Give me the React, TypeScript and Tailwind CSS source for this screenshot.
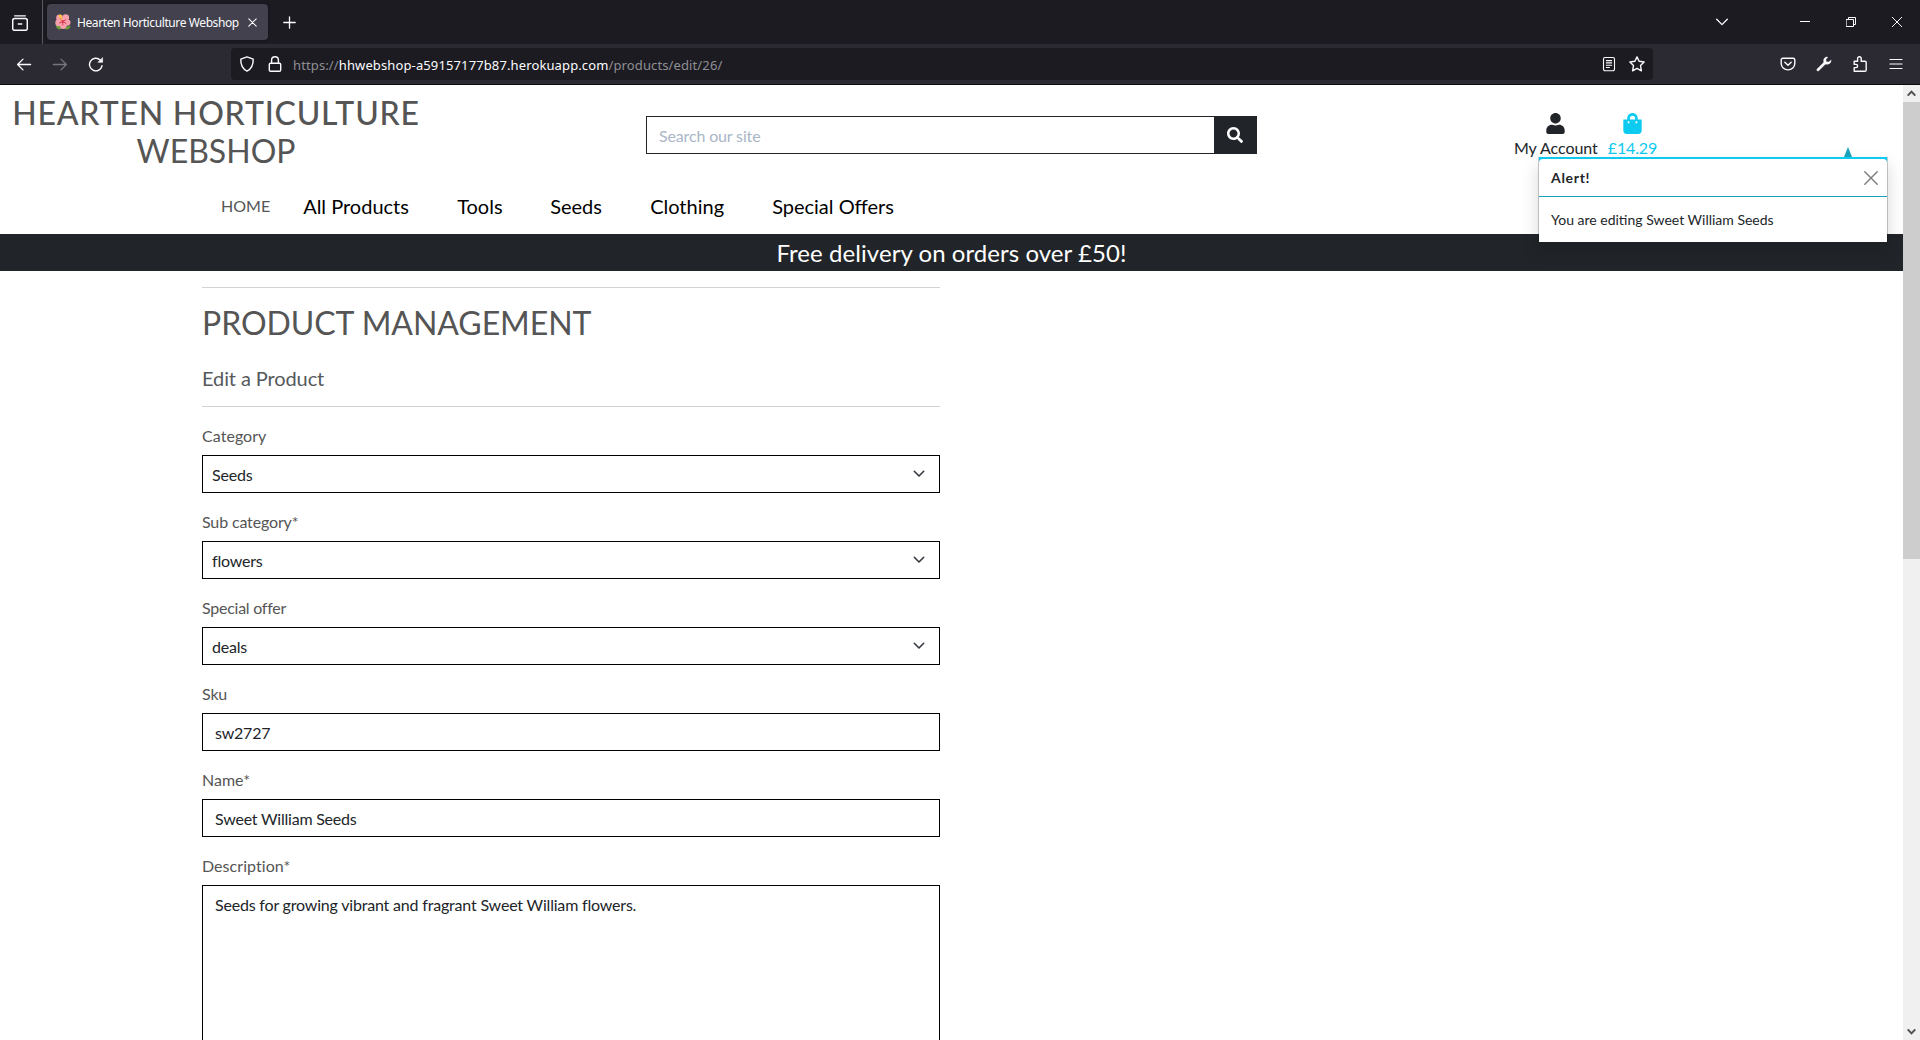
import type { ReactNode } from "react";
import { FaSearch, FaShoppingBag, FaUser } from "react-icons/fa";

function Icon({ size = 16, className = "", children }: { size?: number; className?: string; children: ReactNode }) {
  return (
    <svg width={size} height={size} viewBox={`0 0 ${size} ${size}`} fill="none" stroke="currentColor" strokeWidth="1.3" strokeLinecap="round" strokeLinejoin="round" className={`block shrink-0 ${className}`}>
      {children}
    </svg>
  );
}

function Flower() {
  return (
    <svg width="16" height="16" viewBox="0 0 16 16" className="block shrink-0">
      <path d="M0.6 12.2 L4 10.5 L6.5 15 Q3 16.5 0.6 12.2Z M10 13 L15.6 11.8 Q15 16 10.6 15.4Z" fill="#6a9f3a" />
      <g fill="#f8a1ad">
        <circle cx="4.6" cy="3.9" r="3.4" />
        <circle cx="10.7" cy="3.6" r="3.4" />
        <circle cx="12.4" cy="8.6" r="3.1" />
        <circle cx="8.3" cy="11.8" r="3.3" />
        <circle cx="3.6" cy="8.9" r="3.3" />
        <circle cx="8" cy="8" r="3.5" />
      </g>
      <path d="M7.8 7.5 L5.4 4.6 M7.8 7.5 L10.8 5.8 M7.8 7.5 L11 9.4 M7.8 7.5 L7.8 11 M7.8 7.5 L4.6 9" stroke="#dc3752" strokeWidth="1" strokeLinecap="round" />
      <circle cx="7.8" cy="7.4" r="1.2" fill="#dc3752" />
      <path d="M7 6 L5.6 3" stroke="#f6c431" strokeWidth="1.2" />
      <circle cx="5.4" cy="2" r="1.5" fill="#fbc82e" />
    </svg>
  );
}

function TabBar() {
  return (
    <div className="flex h-11 bg-[#1c1b22] text-[#fbfbfe]">
      <div className="flex w-[43px] items-center justify-center border-r border-[#5a5962] pr-[3px]">
        <Icon className="mt-px">
          <path d="M2.6 0.8 H13.4" />
          <path d="M2.5 3.6 H13.5 a1.8 1.8 0 0 1 1.8 1.8 V13.5 a1.8 1.8 0 0 1 -1.8 1.8 H2.5 a1.8 1.8 0 0 1 -1.8 -1.8 V5.4 a1.8 1.8 0 0 1 1.8 -1.8Z" strokeWidth="1.5" />
          <path d="M6.3 8.9 H9.7" strokeWidth="1.5" />
        </Icon>
      </div>
      <div className="mt-1 ml-1 flex h-9 w-[221px] items-center rounded bg-[#42414d] pl-2 shadow-[0_0_3px_rgba(0,0,0,0.5)]">
        <Flower />
        <span className="mt-px ml-[6px] w-[164px] text-[12px] leading-4 tracking-[-0.4px] whitespace-nowrap">Hearten Horticulture Webshop</span>
        <Icon size={9} className="ml-[7px]">
          <path d="M0.8 0.8 L8.2 8.2 M8.2 0.8 L0.8 8.2" strokeWidth="1.1" />
        </Icon>
      </div>
      <Icon size={13} className="mt-4 ml-[15px]">
        <path d="M6.5 0.8 V12.2 M0.8 6.5 H12.2" />
      </Icon>
      <div className="mr-[18px] ml-auto flex items-center">
        <Icon size={12} className="mr-[72px]">
          <path d="M0.7 3.2 L6 8.6 L11.3 3.2" />
        </Icon>
        <Icon size={10} className="mr-9">
          <path d="M0 4.5 H10" strokeWidth="1" strokeLinecap="butt" />
        </Icon>
        <Icon size={10} className="mr-9">
          <path d="M0.5 2.5 H7.5 V9.5 H0.5Z M2.5 2.5 V0.5 H9.5 V7.5 H7.5" strokeWidth="1" strokeLinejoin="miter" />
        </Icon>
        <Icon size={10}>
          <path d="M0.3 0.3 L9.7 9.7 M9.7 0.3 L0.3 9.7" strokeWidth="1" />
        </Icon>
      </div>
    </div>
  );
}

function AddressBar() {
  return (
    <div className="flex h-[41px] items-center border-b border-[#0c0c0d] bg-[#2b2a33] text-[#fbfbfe]">
      <Icon className="ml-4">
        <path d="M1.6 8.5 H14.6 M7 3.1 L1.6 8.5 L7 13.9" strokeWidth="1.3" />
      </Icon>
      <Icon className="ml-5 text-[#76757d]">
        <path d="M1.4 8.5 H14.4 M9 3.1 L14.4 8.5 L9 13.9" strokeWidth="1.3" />
      </Icon>
      <Icon className="ml-5">
        <path d="M14 9.8 A6.3 6.3 0 1 1 12.2 4" strokeWidth="1.4" />
        <path d="M14.6 1.9 V6.3 H10.2Z" fill="currentColor" strokeWidth="0.6" />
      </Icon>
      <div className="ml-[127px] flex h-8 w-[1422px] items-center rounded bg-[#1c1b22]">
        <Icon className="ml-2">
          <path d="M8 0.9 L14.2 3.2 C14.4 8.8 12.2 12.9 8 15.1 C3.8 12.9 1.6 8.8 1.8 3.2Z" strokeWidth="1.4" />
        </Icon>
        <Icon className="ml-3">
          <path d="M3.6 7.2 H12.4 a1.3 1.3 0 0 1 1.3 1.3 V13.9 a1.3 1.3 0 0 1 -1.3 1.3 H3.6 a1.3 1.3 0 0 1 -1.3 -1.3 V8.5 a1.3 1.3 0 0 1 1.3 -1.3Z M4.6 7.2 V4.1 a3.4 3.4 0 0 1 6.8 0 V7.2" strokeWidth="1.4" />
        </Icon>
        <span className="mt-px ml-[10px] text-[13px] leading-5 tracking-[0.12px] whitespace-nowrap text-[#8f8f94]">
          https://<span className="text-[#fbfbfe]">hhwebshop-a59157177b87.herokuapp.com</span>/products/edit/26/
        </span>
        <Icon className="ml-auto">
          <path d="M4 1.5 H12 a1.5 1.5 0 0 1 1.5 1.5 V13.2 a1.5 1.5 0 0 1 -1.5 1.5 H4 a1.5 1.5 0 0 1 -1.5 -1.5 V3 a1.5 1.5 0 0 1 1.5 -1.5Z M5.4 4.6 H10.6 M5.4 6.9 H10.6 M5.4 9.2 H10.6 M5.4 11.5 H8.4" strokeWidth="1.1" />
        </Icon>
        <Icon className="mr-2 ml-3">
          <path d="M8 0.9 L10.1 5.3 L15.1 6 L11.5 9.5 L12.4 14.8 L8 12.3 L3.6 14.8 L4.5 9.5 L0.9 6 L5.9 5.3Z" strokeWidth="1.4" />
        </Icon>
      </div>
      <div className="mr-4 ml-auto flex items-center gap-5">
        <Icon>
          <path d="M2.8 2.3 H13.2 a1.6 1.6 0 0 1 1.6 1.6 V7.4 a6.8 6.5 0 0 1 -13.6 0 V3.9 a1.6 1.6 0 0 1 1.6 -1.6Z M4.8 6.2 L8 9.2 L11.2 6.2" strokeWidth="1.4" />
        </Icon>
        <Icon>
          <path d="M15 4.4 L12.3 6 L10.2 5.8 L9.9 3.7 L11.7 1 C9.3 0.6 7.2 2.6 7.7 5.4 C7.8 6 7.6 6.5 7.2 6.9 L1.1 13.1 C0.4 13.9 0.9 15.1 2 15 L2.7 14.8 L9 8.6 C9.4 8.2 10 8.1 10.6 8.2 C13.2 8.6 15.3 6.8 15 4.4Z" fill="currentColor" strokeWidth="0.4" />
        </Icon>
        <Icon>
          <path d="M2.2 5.2 H5.6 V2.6 a1.8 1.8 0 0 1 3.6 0 V5.2 H13 a1.2 1.2 0 0 1 1.2 1.2 V14 a1.2 1.2 0 0 1 -1.2 1.2 H2.2 V11.6 H4 a1.6 1.6 0 0 0 0 -3.2 H2.2Z" strokeWidth="1.4" />
        </Icon>
        <Icon>
          <path d="M2 3.5 H14 M2 8 H14 M2 12.5 H14" strokeWidth="1.2" />
        </Icon>
      </div>
    </div>
  );
}

function Toast() {
  return (
    <div className="absolute top-[62px] right-[15px] w-[350px]">
      <svg width="8" height="10" viewBox="0 0 8 10" className="mr-[36px] ml-auto block">
        <path d="M4 0 L8 10 H0Z" fill="#17a2b8" />
      </svg>
      <div className="h-[85px] border-x border-black/20 bg-[#0dcaf0] bg-clip-padding text-[14px] text-[#212529] shadow-[0_8px_16px_rgba(0,0,0,0.15)]">
        <div className="pt-[2px]">
          <div className="flex h-[38px] items-center justify-between rounded-t border-b border-[#17a2b8] bg-white pr-[9px] pl-3">
            <strong className="font-bold tracking-[0.7px]">Alert!</strong>
            <Icon size={14} className="text-[#808080]">
              <path d="M0.8 0.8 L13.2 13.2 M13.2 0.8 L0.8 13.2" strokeWidth="1.5" />
            </Icon>
          </div>
        </div>
        <div className="flex h-[45px] items-center bg-white px-3 whitespace-nowrap">You are editing Sweet William Seeds</div>
      </div>
    </div>
  );
}

function Header() {
  return (
    <header className="relative h-[149px] shrink-0">
      <div className="flex h-[91px]">
        <h1 className="mt-[9px] ml-[12px] w-[408px] text-center text-[32px] leading-[38px] font-medium whitespace-nowrap text-[#555]">
          <span className="tracking-[0.8px]">HEARTEN HORTICULTURE</span>
          <br />
          <span className="font-normal">WEBSHOP</span>
        </h1>
        <div className="mt-[31px] ml-[226px] flex h-[38px] w-[611px] border border-[#212529]">
          <input placeholder="Search our site" className="flex-1 px-3 pt-px text-base tracking-[-0.15px] outline-none placeholder:text-[#a9b6c6]" />
          <button className="flex w-[42px] items-center justify-center bg-[#212529] text-white">
            <FaSearch size={16} />
          </button>
        </div>
        <div className="mt-7 ml-[257px] text-center text-base leading-6 tracking-[-0.05px] whitespace-nowrap text-[#212529]">
          <FaUser size={21} className="mx-auto block" />
          <div className="mt-[2px]">My Account</div>
        </div>
        <div className="mt-7 ml-[10px] text-center text-base leading-6 tracking-[-0.15px] text-[#0dcaf0]">
          <FaShoppingBag size={21} className="mx-auto block" />
          <div className="mt-[2px]">£14.29</div>
        </div>
      </div>
      <nav className="mt-[15px] flex items-center pl-[221px] text-[20px] leading-[30px] whitespace-nowrap text-black">
        <a className="text-[16px] leading-[30px] text-[#555]">HOME</a>
        <a className="ml-[33px] w-[154px]">All Products</a>
        <a className="w-[93px]">Tools</a>
        <a className="w-[100px]">Seeds</a>
        <a className="w-[122px]">Clothing</a>
        <a>Special Offers</a>
      </nav>
      <Toast />
    </header>
  );
}

function Field({ label, tracking = "tracking-[-0.15px]", children }: { label: string; tracking?: string; children: ReactNode }) {
  return (
    <div className="mb-[17px]">
      <label className={`mb-[7px] block leading-6 text-[#555] ${tracking}`}>{label}</label>
      {children}
    </div>
  );
}

function Select({ value }: { value: string }) {
  return (
    <div className="flex h-[38px] items-center justify-between border border-black pt-px pr-[14px] pl-[9px] tracking-[-0.2px] text-[#212529]">
      {value}
      <svg width="12" height="8" viewBox="0 0 12 8" fill="none" stroke="#343a40" strokeWidth="1.6" strokeLinecap="round" strokeLinejoin="round" className="mb-px">
        <path d="M1.3 1.3 L6 6 L10.7 1.3" />
      </svg>
    </div>
  );
}

function Input({ value }: { value: string }) {
  return <input defaultValue={value} className="block h-[38px] w-full border border-black px-3 pt-px tracking-[-0.22px] text-[#212529] outline-none" />;
}

function Scrollbar() {
  return (
    <div className="flex w-[17px] shrink-0 flex-col bg-[#f0f0f0] text-[#505050]">
      <div className="flex h-[17px] items-center justify-center">
        <svg width="9" height="7" viewBox="0 0 9 7" fill="none" stroke="currentColor" strokeWidth="2">
          <path d="M0.7 5.6 L4.5 1.6 L8.3 5.6" />
        </svg>
      </div>
      <div className="h-[457px] bg-[#cdcdcd]" />
      <div className="mt-auto flex h-[17px] items-center justify-center">
        <svg width="9" height="7" viewBox="0 0 9 7" fill="none" stroke="currentColor" strokeWidth="2">
          <path d="M0.7 1.4 L4.5 5.4 L8.3 1.4" />
        </svg>
      </div>
    </div>
  );
}

export default function App() {
  return (
    <div className="flex h-[1040px] w-[1920px] flex-col overflow-hidden bg-white font-['Noto_Sans',sans-serif]">
      <TabBar />
      <AddressBar />
      <div className="flex min-h-0 flex-1">
        <div className="flex min-w-0 flex-1 flex-col overflow-hidden font-['Lato',sans-serif]">
          <Header />
          <div className="h-[37px] shrink-0 bg-[#212529] pt-px text-center text-2xl leading-9 tracking-[0.06px] text-white">Free delivery on orders over £50!</div>
          <main className="ml-[202px] w-[738px] pt-4">
            <hr className="border-[#d3d3d3]" />
            <h2 className="mt-4 text-[32px] leading-[38px] tracking-[-0.05px] text-[#555]">PRODUCT MANAGEMENT</h2>
            <h5 className="mt-6 text-[20px] leading-6 tracking-[-0.1px] text-[#55595c]">Edit a Product</h5>
            <hr className="mt-4 mb-[17px] border-[#d3d3d3]" />
            <Field label="Category" tracking="tracking-[0.05px]">
              <Select value="Seeds" />
            </Field>
            <Field label="Sub category*">
              <Select value="flowers" />
            </Field>
            <Field label="Special offer" tracking="tracking-[-0.25px]">
              <Select value="deals" />
            </Field>
            <Field label="Sku">
              <Input value="sw2727" />
            </Field>
            <Field label="Name*" tracking="tracking-[0px]">
              <Input value="Sweet William Seeds" />
            </Field>
            <Field label="Description*" tracking="tracking-[0.05px]">
              <textarea defaultValue="Seeds for growing vibrant and fragrant Sweet William flowers." className="block h-[254px] w-full resize-none border border-black px-3 py-[7px] leading-6 tracking-[-0.19px] text-[#212529] outline-none" />
            </Field>
          </main>
        </div>
        <Scrollbar />
      </div>
    </div>
  );
}
